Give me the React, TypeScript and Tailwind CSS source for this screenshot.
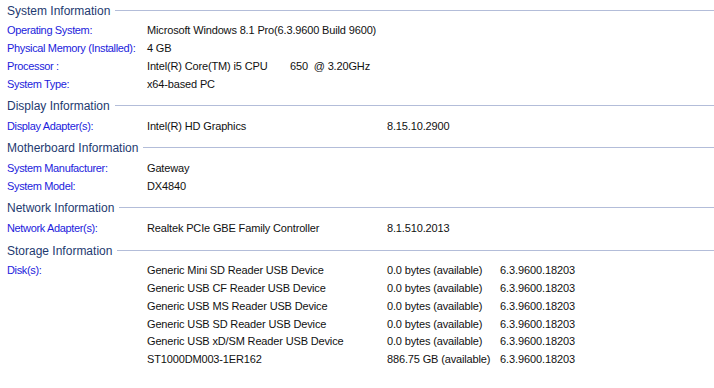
import React from "react";

const Header = ({ title, mt }: { title: string; mt: string }) => (
  <div className={`flex items-center h-[18px] ${mt}`}>
    <span className="text-[12px] leading-[18px] text-[#1e3a70] whitespace-nowrap">{title}</span>
    <div className="flex-1 h-px bg-[#b3bdd9] ml-[5px] mt-[-1px]" />
  </div>
);

const Row = ({
  label,
  value,
  c3,
  c4,
  children,
}: {
  label: string;
  value?: string;
  c3?: string;
  c4?: string;
  children?: React.ReactNode;
}) => (
  <div className="flex items-center h-[17.75px] text-[11px] leading-[17px] whitespace-nowrap">
    <span className="w-[140px] text-[#1c1cdc] tracking-[-0.35px]">{label}</span>
    <span className="w-[240px] text-[#111] tracking-[-0.15px]">{children ?? value}</span>
    <span className="w-[113px] text-[#111] tracking-[-0.15px]">{c3}</span>
    <span className="text-[#111] tracking-[-0.1px]">{c4}</span>
  </div>
);

export default function App() {
  const disks: [string, string][] = [
    ["Generic Mini SD Reader USB Device", "0.0 bytes (available)"],
    ["Generic USB CF Reader USB Device", "0.0 bytes (available)"],
    ["Generic USB MS Reader USB Device", "0.0 bytes (available)"],
    ["Generic USB SD Reader USB Device", "0.0 bytes (available)"],
    ["Generic USB xD/SM Reader USB Device", "0.0 bytes (available)"],
    ["ST1000DM003-1ER162", "886.75 GB (available)"],
  ];
  return (
    <div className="w-[714px] h-[388px] bg-white pl-[7px] pt-[2px] font-['Liberation_Sans',Arial,sans-serif] overflow-hidden">
      <Header title="System Information" mt="mt-0" />
      <div className="mt-[2px]">
        <Row label="Operating System:" value="Microsoft Windows 8.1 Pro(6.3.9600 Build 9600)" />
        <Row label="Physical Memory (Installed):" value="4 GB" />
        <Row label="Processor  :">
          <span className="flex">
            <span className="w-[143px]">Intel(R) Core(TM) i5 CPU</span>
            <span className="whitespace-pre">650  @ 3.20GHz</span>
          </span>
        </Row>
        <Row label="System Type:" value="x64-based PC" />
      </div>
      <Header title="Display Information" mt="mt-[4px]" />
      <div className="mt-[3px]">
        <Row label="Display Adapter(s):" value="Intel(R) HD Graphics" c3="8.15.10.2900" />
      </div>
      <Header title="Motherboard Information" mt="mt-[3px]" />
      <div className="mt-[3px]">
        <Row label="System Manufacturer:" value="Gateway" />
        <Row label="System Model:" value="DX4840" />
      </div>
      <Header title="Network Information" mt="mt-[4px]" />
      <div className="mt-[2px]">
        <Row label="Network Adapter(s):" value="Realtek PCIe GBE Family Controller" c3="8.1.510.2013" />
      </div>
      <Header title="Storage Information" mt="mt-[5px]" />
      <div className="mt-[2px]">
        {disks.map(([name, avail], i) => (
          <Row key={i} label={i === 0 ? "Disk(s):" : ""} value={name} c3={avail} c4="6.3.9600.18203" />
        ))}
      </div>
    </div>
  );
}
